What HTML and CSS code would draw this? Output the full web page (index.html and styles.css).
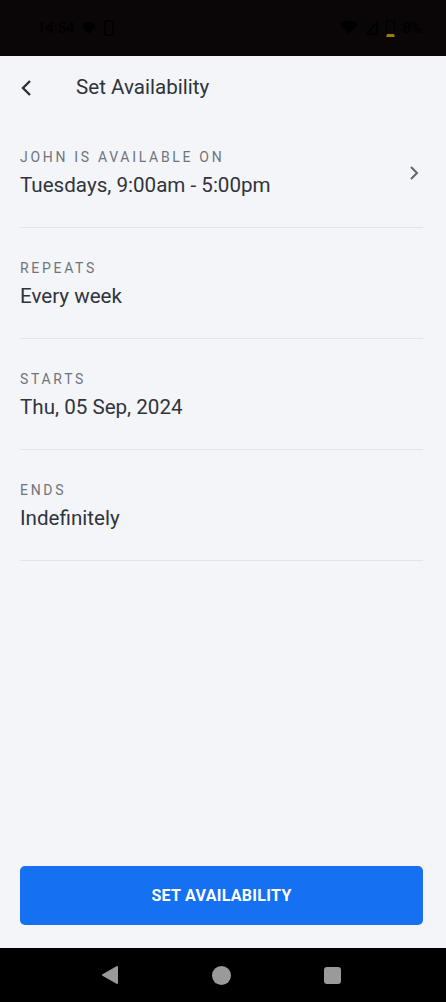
FILE: index.html
```html
<!DOCTYPE html>
<html lang="en">
<head>
    <meta charset="UTF-8">
    <meta name="viewport" content="width=device-width, initial-scale=1.0">
    <title>Set Availability</title>
    <link rel="stylesheet" href="styles.css">
</head>
<body>
    <div class="status-bar">
        <div class="status-left">
            <span class="clock">14:54</span>
            <svg width="14" height="14" viewBox="0 0 14 14"><path d="M7 13 L1 6 A4 4 0 0 1 7 2 A4 4 0 0 1 13 6 Z" fill="#000"/></svg>
            <svg width="10" height="16" viewBox="0 0 10 16"><rect x="1" y="1" width="8" height="14" rx="1.5" fill="none" stroke="#000" stroke-width="2"/></svg>
        </div>
        <div class="status-right">
            <svg width="18" height="14" viewBox="0 0 18 14"><path d="M9 13 L0 3 A13 13 0 0 1 18 3 Z" fill="#000"/></svg>
            <svg width="12" height="14" viewBox="0 0 12 14"><path d="M11 1 L11 13 L1 13 Z" fill="none" stroke="#000" stroke-width="1.5"/></svg>
            <span class="battery"></span>
            <span class="percent">8%</span>
        </div>
    </div>

    <div class="app-bar">
        <button class="back">
            <svg width="14" height="18" viewBox="0 0 14 18"><path d="M10 2 L3 9 L10 16" fill="none" stroke="#2d3038" stroke-width="2.4"/></svg>
        </button>
        <h1>Set Availability</h1>
    </div>

    <div class="content">
        <div class="field field-link">
            <div>
                <div class="field-label">John is available on</div>
                <div class="field-value">Tuesdays, 9:00am - 5:00pm</div>
            </div>
            <svg class="chevron" width="10" height="16" viewBox="0 0 10 16"><path d="M2 2 L8 8 L2 14" fill="none" stroke="#5f6670" stroke-width="2"/></svg>
        </div>
        <div class="field">
            <div class="field-label">Repeats</div>
            <div class="field-value">Every week</div>
        </div>
        <div class="field">
            <div class="field-label">Starts</div>
            <div class="field-value">Thu, 05 Sep, 2024</div>
        </div>
        <div class="field">
            <div class="field-label">Ends</div>
            <div class="field-value">Indefinitely</div>
        </div>
    </div>

    <div class="footer">
        <button class="primary">SET AVAILABILITY</button>
    </div>

    <div class="nav-bar">
        <svg width="18" height="20" viewBox="0 0 18 20"><path d="M16 2 L16 18 L2 10 Z" fill="#9a9a9a" stroke="#9a9a9a" stroke-width="2" stroke-linejoin="round"/></svg>
        <span class="home"></span>
        <span class="recents"></span>
    </div>
</body>
</html>
```

FILE: styles.css
```css
body {
    margin: 0;
    font-family: Roboto, "Liberation Sans", sans-serif;
    background: #f4f5f9;
    color: #2d3038;
    height: 1002px;
    display: flex;
    flex-direction: column;
    overflow: hidden;
}

.status-bar {
    height: 56px;
    background: #0a0506;
    display: flex;
    justify-content: space-between;
    align-items: center;
    padding: 0 24px 0 37px;
    color: #000;
    font-size: 15px;
}

.status-left,
.status-right {
    display: flex;
    align-items: center;
    gap: 8px;
}

.battery {
    width: 7px;
    height: 13px;
    border: 1.5px solid #000;
    border-bottom: 3px solid #9c7a10;
    border-radius: 1px;
}

.app-bar {
    height: 61px;
    display: flex;
    align-items: center;
    padding: 0 20px;
}

.back {
    background: none;
    border: none;
    padding: 0;
    width: 56px;
    display: flex;
    align-items: center;
    margin-top: 2px;
}

.app-bar h1 {
    margin: 0;
    font-size: 20.6px;
    font-weight: 400;
    color: #2f333b;
}

.content {
    flex: 1;
    padding: 0 23px 0 20px;
}

.field {
    padding: 30px 0 28px;
    border-bottom: 1px solid #e3e5ea;
}

.field-link {
    display: flex;
    justify-content: space-between;
    align-items: center;
}

.chevron {
    margin-right: 4px;
}

.field-label {
    font-size: 14px;
    line-height: 20px;
    letter-spacing: 2.7px;
    text-transform: uppercase;
    color: #6e747c;
}

.field-value {
    font-size: 20.6px;
    line-height: 28px;
    margin-top: 4px;
    color: #30343b;
}

.footer {
    padding: 0 23px 23px 20px;
}

.primary {
    width: 100%;
    height: 59px;
    border: none;
    border-radius: 5px;
    background: #1570f2;
    color: #fff;
    font-family: Roboto, "Liberation Sans", sans-serif;
    font-size: 16px;
    font-weight: 700;
    letter-spacing: 0.3px;
}

.nav-bar {
    height: 54px;
    background: #000;
    display: flex;
    justify-content: center;
    align-items: center;
    gap: 93px;
    padding-right: 4px;
}

.home {
    width: 19px;
    height: 19px;
    border-radius: 50%;
    background: #9a9a9a;
}

.recents {
    width: 17px;
    height: 17px;
    border-radius: 3px;
    background: #9a9a9a;
}
```
